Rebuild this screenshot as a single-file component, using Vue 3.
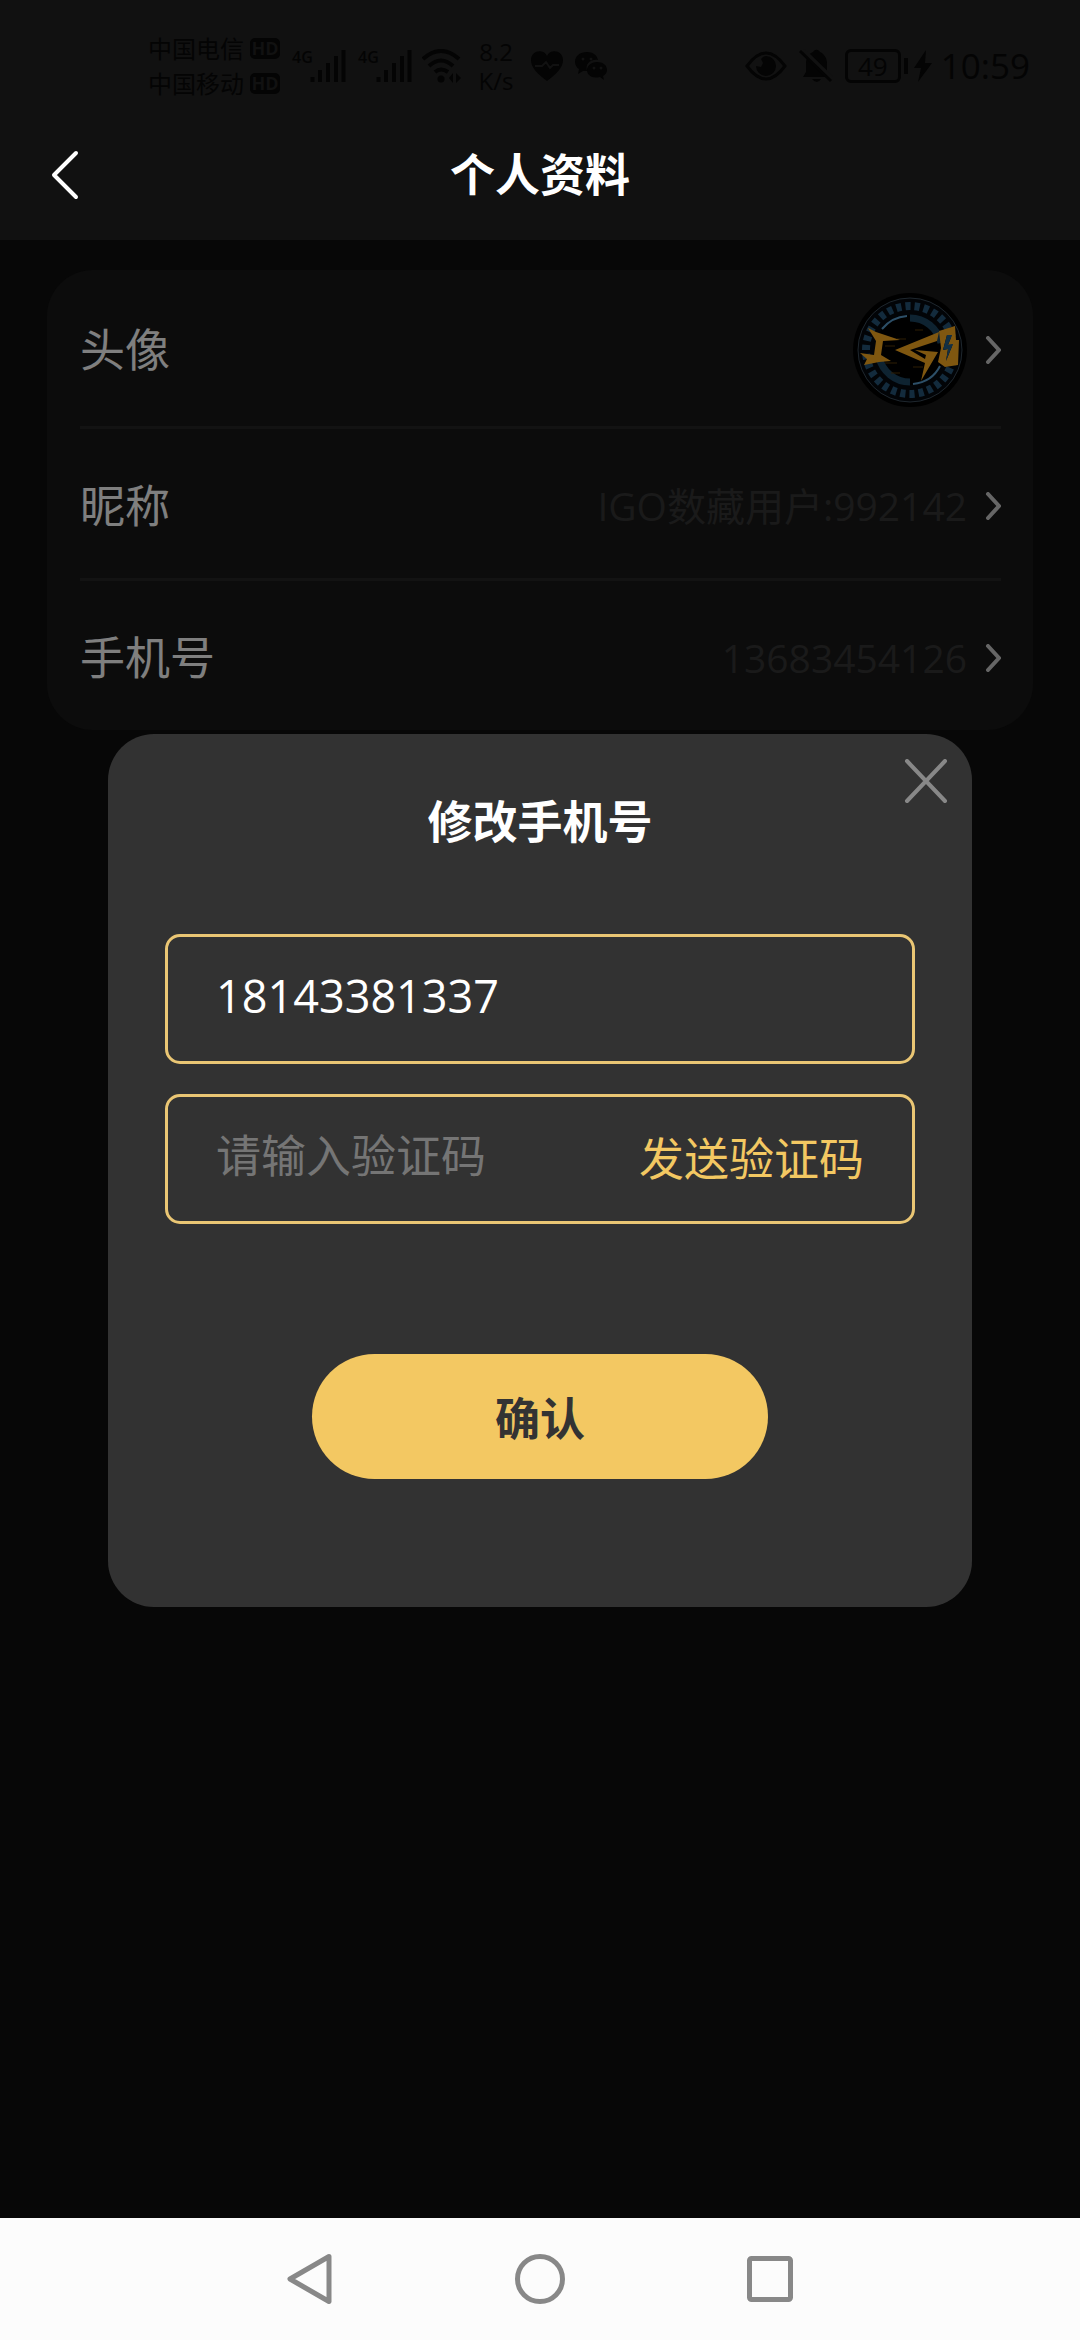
<template>
  <div class="page">
    <header class="header">
      <div class="status-bar">
        <div class="status-group">
          <div class="carriers">
            <div v-for="name in carriers" :key="name" class="carrier">
              <span>{{ name }}</span>
              <span class="hd">HD</span>
            </div>
          </div>
          <div v-for="n in 2" :key="n" class="signal">
            <span class="signal-type">4G</span>
            <svg width="36" height="34" viewBox="0 0 36 34">
              <path
                d="M2.500 28v5M10 21v12M18 14v19M26 7v26M33.500 1v32"
                stroke="currentColor"
                stroke-width="4"
              />
            </svg>
          </div>
          <svg class="wifi" width="40" height="34" viewBox="0 0 40 34" fill="none" stroke="currentColor" stroke-width="4">
            <path d="M1 10Q19-6 37 10M7 17Q19 6 31 17M13 23Q19 18 26 23" />
            <circle cx="19" cy="30" r="3.500" fill="currentColor" stroke="none" />
            <path d="M31 24l-4 5 4 5zM34 24l5 5-5 5z" fill="currentColor" stroke="none" />
          </svg>
          <div class="speed">
            <span>8.2</span>
            <span>K/s</span>
          </div>
          <svg class="heart" width="34" height="30" viewBox="0 0 34 30">
            <path d="M17 30C8 23 1 17 1 9c0-9 12-12 16-4C21-3 33 0 33 9c0 8-7 14-16 21z" fill="currentColor" />
            <path d="M5 15h7l4-4 4 6 3-3h6" fill="none" stroke="#111" stroke-width="2" />
          </svg>
          <svg width="34" height="30" viewBox="0 0 34 30" fill="currentColor">
            <path d="M13 1C6 1 1 5 1 11c0 3 2 6 4 7l-1 5 5-3h4c-2-8 4-12 11-11C23 4 19 1 13 1z" />
            <path d="M23 11c-6 0-10 4-10 8 0 5 5 9 13 7l4 3-1-4c2-1 4-3 4-6 0-5-4-8-10-8z" />
            <g fill="#111">
              <circle cx="9" cy="8" r="1.500" />
              <circle cx="17" cy="8" r="1.500" />
              <circle cx="20" cy="17" r="1.500" />
              <circle cx="27" cy="17" r="1.500" />
            </g>
          </svg>
        </div>
        <div class="status-group status-group--right">
          <svg width="42" height="30" viewBox="0 0 42 30">
            <path d="M2 15Q21-11 40 15Q21 41 2 15z" fill="none" stroke="currentColor" stroke-width="3" />
            <path d="M21 5a10 10 0 1 1-10 10l5 1 2-4-2-4q2-3 5-3z" fill="currentColor" />
          </svg>
          <svg width="34" height="34" viewBox="0 0 34 34">
            <path d="M4 28l3-5V14C7 8 11 4 14 3c2-3 5-3 7 0 4 2 7 6 7 11v9l3 5zM13 30h9q-4 6-9 0z" fill="currentColor" />
            <path d="M4 1l30 29" stroke="#111" stroke-width="4" />
            <path d="M1 2l31 30" stroke="currentColor" stroke-width="3" />
          </svg>
          <div class="battery">
            <span class="battery-level">49</span>
          </div>
          <svg class="bolt" width="20" height="34" viewBox="0 0 20 34">
            <path d="M13 1L1 19h7L5 33 19 14h-7z" fill="currentColor" />
          </svg>
          <span class="clock">10:59</span>
        </div>
      </div>
      <div class="title-bar">
        <button type="button" class="back" aria-label="返回">
          <svg width="30" height="50" viewBox="0 0 30 50">
            <path d="M26 3L4 25l22 22" fill="none" stroke="#fff" stroke-width="4" stroke-linecap="round" stroke-linejoin="round" />
          </svg>
        </button>
        <h1>个人资料</h1>
      </div>
    </header>

    <main class="content">
      <ul class="card">
        <li v-for="row in rows" :key="row.label" class="row" :class="{ 'row--avatar': row.avatar }">
          <span class="row-label">{{ row.label }}</span>
          <svg v-if="row.avatar" class="avatar" viewBox="0 0 114 114">
            <circle cx="57" cy="57" r="57" fill="#000" />
            <circle cx="57" cy="57" r="52" fill="#04080e" stroke="#3d4e5c" stroke-width="1" />
            <circle cx="57" cy="57" r="44" fill="none" stroke="#27577a" stroke-width="8" stroke-dasharray="5.200 4" />
            <circle cx="57" cy="57" r="35" fill="#000" />
            <path d="M57 25a32 32 0 0 1 31 25M57 89a32 32 0 0 1-31-25" fill="none" stroke="#1c4663" stroke-width="7" />
            <path d="M29 36Q39 24 54 23M60 91Q79 89 87 73" fill="none" stroke="#5a9fd0" stroke-width="2" />
            <path d="M32 53h10M44 46h9M32 70h12M60 74h10M62 37h8M38 80h9" stroke="#5c3c08" />
            <!-- lightning style emblem -->
            <g fill="#ffae20">
              <path d="M15 35l8 4 24 8-17 1-2 14 10 6-12 1-15 3 3-6-7-6 14 2 2-14z" />
              <path d="M86 39L42 57l30 13-4 18 17-29-23-2 11 5-1 4-15-9 27-9z" />
              <path fill-rule="evenodd" d="M86 38l16-5 1 14h3l-1 25-13 2-7-5 3-14zm8 4l-4 15 5-1-2 12 7-17-5 1 4-10z" />
            </g>
            <path d="M94 42l-4 15 5-1-2 12 7-17-5 1 4-10z" fill="#246088" />
          </svg>
          <span v-else class="row-value">{{ row.value }}</span>
          <svg class="chevron" width="16" height="28" viewBox="0 0 16 28">
            <path d="M3 2l11 12L3 26" fill="none" stroke="#ccc" stroke-width="4" stroke-linecap="round" />
          </svg>
        </li>
      </ul>
    </main>

    <div v-if="dialogVisible" class="mask">
      <form class="dialog" role="dialog" aria-labelledby="dialog-title" @submit.prevent>
        <button type="button" class="close" aria-label="关闭" @click="dialogVisible = false">
          <svg width="44" height="44" viewBox="0 0 44 44">
            <path d="M3 2l38 40M41 2L3 42" stroke="#888" stroke-width="4" stroke-linecap="round" />
          </svg>
        </button>
        <h2 id="dialog-title">修改手机号</h2>
        <div class="field">
          <input v-model="phone" type="tel" aria-label="手机号" />
        </div>
        <div class="field">
          <input v-model="code" type="text" placeholder="请输入验证码" aria-label="验证码" />
          <button type="button" class="send-code">发送验证码</button>
        </div>
        <button type="submit" class="confirm">确认</button>
      </form>
    </div>

    <nav class="system-nav">
      <button type="button" aria-label="后退">
        <svg width="50" height="54" viewBox="0 0 50 54">
          <path d="M44 4.500L5 27l39 22.500z" />
        </svg>
      </button>
      <button type="button" aria-label="主屏幕">
        <svg width="54" height="54" viewBox="0 0 54 54">
          <circle cx="27" cy="27" r="22.500" />
        </svg>
      </button>
      <button type="button" aria-label="最近任务">
        <svg width="50" height="50" viewBox="0 0 50 50">
          <rect x="4.500" y="4.500" width="41" height="41" rx="2" />
        </svg>
      </button>
    </nav>
  </div>
</template>

<script setup>
import { ref } from "vue";

const carriers = ["中国电信", "中国移动"];

const rows = [
  { label: "头像", avatar: true },
  { label: "昵称", value: "IGO数藏用户:992142" },
  { label: "手机号", value: "13683454126" },
];

const dialogVisible = ref(true);
const phone = ref("18143381337");
const code = ref("");
</script>

<style>
body {
  background: #0e0e0e;
}
</style>

<style scoped>
.page {
  display: flex;
  flex-direction: column;
  min-height: 100vh;
  font-family: "Open Sans", "Noto Sans CJK SC", sans-serif;
  color: #fff;
}

button {
  padding: 0;
  border: none;
  background: none;
  font: inherit;
  cursor: pointer;
}

svg {
  display: block;
  flex-shrink: 0;
}

/* HEADER */
.header {
  position: relative;
  z-index: 20;
  height: 240px;
  background: #111;
}

.status-bar {
  display: flex;
  justify-content: space-between;
  align-items: center;
  height: 108px;
  padding: 24px 50px 0 148px;
  box-sizing: border-box;
  color: #040404;
}

.status-group {
  display: flex;
  align-items: center;
}
.status-group--right {
  gap: 12px;
}

.carrier {
  display: flex;
  align-items: center;
  gap: 6px;
  height: 35px;
  font-size: 24px;
  line-height: 35px;
}
.hd {
  width: 30px;
  border-radius: 5px;
  background: #040404;
  color: #111;
  font-size: 18px;
  font-weight: 700;
  line-height: 21px;
  text-align: center;
}

.signal {
  display: flex;
  align-items: flex-start;
  margin-left: 12px;
}
.signal-type {
  width: 18px;
  font-size: 16px;
  font-weight: 600;
  line-height: 16px;
}

.wifi {
  margin-left: 10px;
}

.speed {
  display: flex;
  flex-direction: column;
  width: 44px;
  margin: 0 12px;
  font-size: 24px;
  line-height: 29px;
  text-align: center;
}

.heart {
  margin-right: 10px;
}

.battery {
  position: relative;
  width: 56px;
  height: 34px;
  border: 3px solid currentColor;
  border-radius: 6px;
  box-sizing: border-box;
  text-align: center;
}
.battery::after {
  content: "";
  position: absolute;
  top: 6px;
  right: -10px;
  width: 4px;
  height: 16px;
  background: currentColor;
}
.battery-level {
  display: block;
  font-size: 26px;
  line-height: 28px;
}

.bolt {
  margin-right: -4px;
}

.clock {
  font-size: 35px;
  line-height: 40px;
}

.title-bar {
  display: grid;
  grid-template-columns: 80px 1fr 80px;
  align-items: center;
  height: 132px;
  padding-top: 2px;
  box-sizing: border-box;
}
.back {
  justify-self: end;
}

h1,
h2 {
  margin: 0;
  font-size: 45px;
  font-weight: 700;
  line-height: 60px;
  text-align: center;
}

/* PROFILE LIST */
.content {
  flex: 1;
  padding: 30px 47px;
}

.card {
  margin: 0;
  padding: 0 32px 0 33px;
  border-radius: 46px;
  background: #181818;
  list-style: none;
}

.row {
  display: flex;
  align-items: center;
  height: 152px;
  padding-top: 4px;
  border-bottom: 3px solid #262626;
  box-sizing: border-box;
}
.row--avatar {
  height: 159px;
}
.row:last-child {
  height: 149px;
  border-bottom: none;
}

.row-label {
  margin-right: auto;
  font-size: 45px;
  line-height: 60px;
}
.row-value {
  color: #343434;
  font-size: 39px;
  line-height: 60px;
}

.avatar {
  width: 114px;
  height: 114px;
}

.chevron {
  margin-left: 18px;
}

/* DIALOG */
.mask {
  position: fixed;
  inset: 0;
  z-index: 10;
  display: flex;
  justify-content: center;
  align-items: center;
  background: rgba(0, 0, 0, 0.5);
}

.dialog {
  position: relative;
  display: flex;
  flex-direction: column;
  width: 80%;
  padding: 58px 57px 128px;
  border-radius: 46px;
  box-sizing: border-box;
  background: #323232;
}

.close {
  position: absolute;
  top: 25px;
  right: 24px;
}

.field {
  display: flex;
  align-items: center;
  height: 130px;
  margin-top: 30px;
  padding: 0 48px;
  border: 3px solid #eac674;
  border-radius: 15px;
  box-sizing: border-box;
}
h2 + .field {
  margin-top: 82px;
}

.field input {
  flex: 1;
  min-width: 0;
  padding: 0 0 5px;
  border: none;
  outline: none;
  background: none;
  color: #fff;
  font: inherit;
  font-size: 45px;
  line-height: 60px;
}
.field input::placeholder {
  color: #757575;
  opacity: 1;
}

.send-code {
  color: #f3c862;
  font-size: 45px;
  line-height: 60px;
}

.confirm {
  align-self: center;
  width: 456px;
  height: 125px;
  margin-top: 130px;
  border-radius: 63px;
  background: #f3c862;
  color: #333;
  font-size: 45px;
  font-weight: 700;
}

/* SYSTEM NAVIGATION */
.system-nav {
  position: relative;
  z-index: 20;
  display: flex;
  justify-content: center;
  height: 122px;
  background: #fcfcfc;
}
.system-nav button {
  display: flex;
  justify-content: center;
  align-items: center;
  width: 230px;
}
.system-nav svg {
  fill: none;
  stroke: #888;
  stroke-width: 5;
  stroke-linejoin: round;
}
</style>
